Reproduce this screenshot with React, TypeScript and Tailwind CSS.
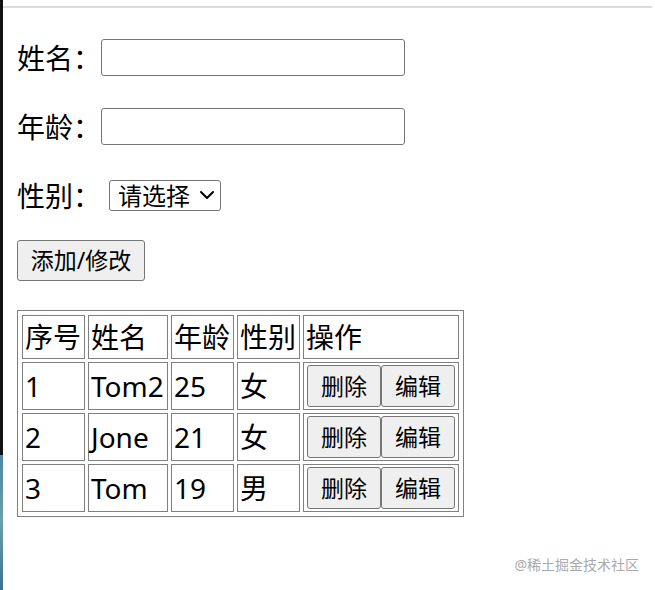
import { ChevronDown } from 'lucide-react';

type Person = {
  id: number;
  name: string;
  age: number;
  sex: string;
};

const people: Person[] = [
  { id: 1, name: 'Tom2', age: 25, sex: '女' },
  { id: 2, name: 'Jone', age: 21, sex: '女' },
  { id: 3, name: 'Tom', age: 19, sex: '男' },
];

const font = { fontFamily: '"Noto Sans", "Noto Sans CJK SC", sans-serif' };

const cell = 'border border-[#808080] px-[2px] align-middle text-left leading-none';

const FieldRow = ({ label, children }: { label: string; children: React.ReactNode }) => (
  <div className="flex items-center h-[37px]">
    <span className="text-[28px] leading-none w-[84px] whitespace-nowrap">{label}</span>
    {children}
  </div>
);

const App = () => {
  return (
    <div className="flex w-[655px] h-[590px] bg-white text-black overflow-hidden" style={font}>
      {/* window edge behind the page */}
      <div className="flex flex-col w-[3px] shrink-0">
        <div className="h-[455px] bg-[#111]" />
        <div className="flex-1 bg-gradient-to-b from-[#4f86a8] via-[#6aa0a8] to-[#3f6f94]" />
      </div>

      <div className="relative flex-1 flex flex-col">
        <div className="mt-[6px] h-[2px] w-[649px] bg-[#dcdcdc]" />

        <div className="flex flex-col pl-[14px] pt-[31px]">
          <FieldRow label="姓名：">
            <input className="w-[304px] h-[37px] border border-[#767676] rounded-[3px] bg-white outline-none" />
          </FieldRow>

          <div className="mt-[32px]">
            <FieldRow label="年龄：">
              <input className="w-[304px] h-[37px] border border-[#767676] rounded-[3px] bg-white outline-none" />
            </FieldRow>
          </div>

          <div className="flex items-center h-[31px] mt-[35px]">
            <span className="text-[28px] leading-none w-[92px] whitespace-nowrap">性别：</span>
            <div className="relative w-[112px] h-[31px]">
              <select
                className="appearance-none w-full h-full border border-[#767676] rounded-[3px] bg-white pl-[8px] text-[24px] leading-none outline-none"
                style={font}
                defaultValue=""
              >
                <option value="">请选择</option>
                <option value="男">男</option>
                <option value="女">女</option>
              </select>
              <ChevronDown
                className="absolute right-[2px] top-[3px] pointer-events-none"
                size={24}
                strokeWidth={2}
              />
            </div>
          </div>

          <button
            className="mt-[29px] w-[128px] h-[41px] border border-[#767676] rounded-[3px] bg-[#efefef] text-[23px] leading-none"
            style={font}
          >
            添加/修改
          </button>

          <table className="mt-[29px] table-fixed w-[447px] border border-[#808080] border-separate border-spacing-[3px] p-px">
            <tbody>
              <tr>
                <td className={`${cell} w-[63px] h-[44px] text-[28px]`}>序号</td>
                <td className={`${cell} w-[80px] h-[44px] text-[28px]`}>姓名</td>
                <td className={`${cell} w-[63px] h-[44px] text-[28px]`}>年龄</td>
                <td className={`${cell} w-[63px] h-[44px] text-[28px]`}>性别</td>
                <td className={`${cell} w-[156px] h-[44px] text-[28px]`}>操作</td>
              </tr>
              {people.map((p) => (
                <tr key={p.id}>
                  <td className={`${cell} h-[48px] text-[28px]`}>{p.id}</td>
                  <td className={`${cell} h-[48px] text-[28px]`}>{p.name}</td>
                  <td className={`${cell} h-[48px] text-[28px]`}>{p.age}</td>
                  <td className={`${cell} h-[48px] text-[28px]`}>{p.sex}</td>
                  <td className={`${cell} h-[48px] pl-[3px]`}>
                    <div className="flex">
                      <button
                        className="w-[74px] h-[42px] border border-[#767676] rounded-[3px] bg-[#efefef] text-[23px] leading-none"
                        style={font}
                      >
                        删除
                      </button>
                      <button
                        className="w-[74px] h-[42px] border border-[#767676] rounded-[3px] bg-[#efefef] text-[23px] leading-none"
                        style={font}
                      >
                        编辑
                      </button>
                    </div>
                  </td>
                </tr>
              ))}
            </tbody>
          </table>
        </div>

        {/* watermark */}
        <span className="absolute right-[16px] bottom-[18px] text-[14px] leading-none text-[#aaaaaa]">
          @稀土掘金技术社区
        </span>
      </div>
    </div>
  );
};

export default App;
